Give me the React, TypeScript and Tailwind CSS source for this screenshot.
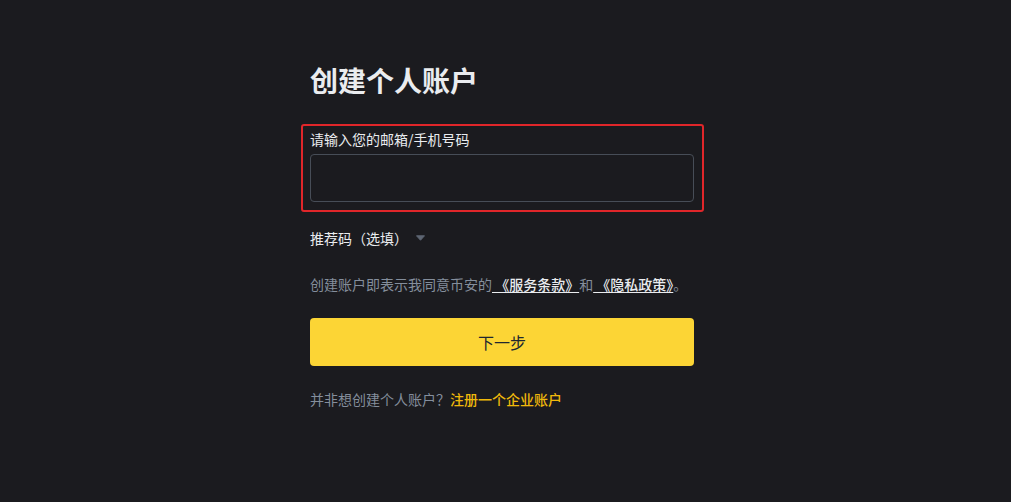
import React from "react";

export default function App() {
  return (
    <div
      className="w-[1011px] h-[502px] bg-[#1b1b1f] overflow-hidden"
      style={{ fontFamily: '"Noto Sans CJK SC", "Noto Sans", sans-serif' }}
    >
      <div className="ml-[310px] w-[384px] pt-[62px] flex flex-col">
        <h1 className="text-[28px] leading-[36px] font-bold text-[#eaecef]">创建个人账户</h1>

        <div className="mt-[26px] -ml-[9px] -mr-[10px] pl-[7px] pr-[8px] pt-[3px] pb-[8px] border-2 border-[#e0262a] rounded-[3px]">
          <div className="text-[14px] leading-[20px] text-[#eaecef]">请输入您的邮箱/手机号码</div>
          <div className="mt-[5px] h-[48px] rounded-[4px] border border-[#474d57] bg-[#1b1b1f]"></div>
        </div>

        <div className="mt-[16px] flex items-center text-[14px] leading-[20px] text-[#eaecef]">
          <span>推荐码（选填）</span>
          <svg className="ml-[8px]" width="9" height="6" viewBox="0 0 10 6">
            <path d="M0.5 0.5 H9.5 L5 5.5 Z" fill="#5e6673" stroke="#5e6673" strokeLinejoin="round" />
          </svg>
        </div>

        <div className="mt-[26px] text-[14px] leading-[20px] text-[#848e9c] whitespace-nowrap">
          创建账户即表示我同意币安的
          <span className="text-[#eaecef] font-medium underline underline-offset-2"> 《服务条款》</span>
          和
          <span className="text-[#eaecef] font-medium underline underline-offset-2"> 《隐私政策》</span>
          。
        </div>

        <button className="mt-[24px] h-[48px] w-full rounded-[4px] bg-[#fcd535] text-[16px] text-[#202630]">
          下一步
        </button>

        <div className="mt-[23px] text-[14px] leading-[20px] text-[#848e9c]">
          并非想创建个人账户？<span className="text-[#f0b90b] font-medium">注册一个企业账户</span>
        </div>
      </div>
    </div>
  );
}
